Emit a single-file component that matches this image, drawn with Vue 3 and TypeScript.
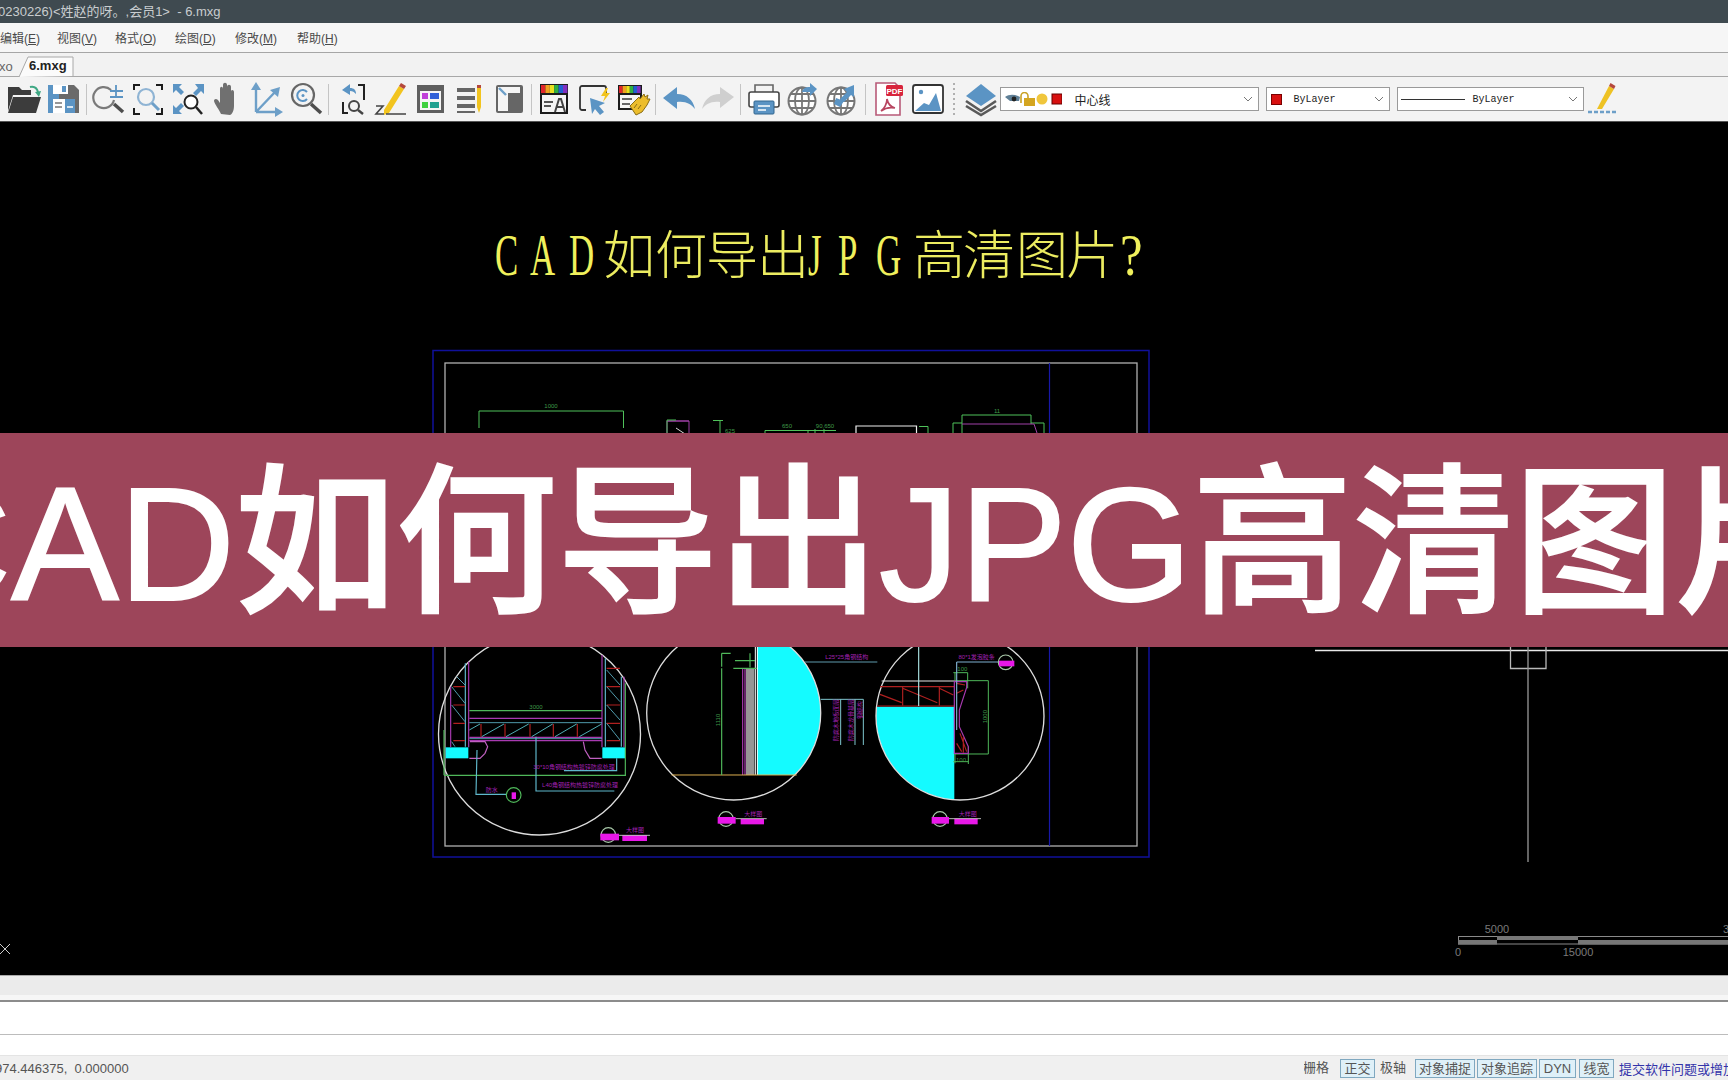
<script setup lang="ts">
interface Glyph { ch: string; x: number; latin: boolean; sx: number }
const titleGlyphs: Glyph[] = [
  { ch: 'C', x: 495, latin: true, sx: 0.58 }, { ch: 'A', x: 530, latin: true, sx: 0.58 }, { ch: 'D', x: 569, latin: true, sx: 0.58 },
  { ch: '如', x: 603, latin: false, sx: 1 }, { ch: '何', x: 655, latin: false, sx: 1 }, { ch: '导', x: 706, latin: false, sx: 1 },
  { ch: '出', x: 757, latin: false, sx: 1 }, { ch: 'J', x: 808, latin: true, sx: 0.58 }, { ch: 'P', x: 838, latin: true, sx: 0.58 },
  { ch: 'G', x: 876, latin: true, sx: 0.58 }, { ch: '高', x: 913, latin: false, sx: 1 }, { ch: '清', x: 963, latin: false, sx: 1 },
  { ch: '图', x: 1016, latin: false, sx: 1 }, { ch: '片', x: 1066, latin: false, sx: 1 }, { ch: '?', x: 1120, latin: true, sx: 0.85 }
]
const menus = [
  ['编辑', 'E'], ['视图', 'V'], ['格式', 'O'], ['绘图', 'D'], ['修改', 'M'], ['帮助', 'H']
]
const rainbow = ['#e0252b', '#f0a020', '#e8e020', '#30b040', '#2060d0', '#8030c0']
</script>

<template>
  <div class="app">
    <header class="titlebar"><span>0230226)&lt;姓赵的呀。,会员1&gt;&nbsp; - 6.mxg</span></header>

    <nav class="menubar">
      <span v-for="m in menus" :key="m[1]" class="menu">{{ m[0] }}(<u>{{ m[1] }}</u>)</span>
    </nav>

    <div class="tabs">
      <span class="tab-prev">xo</span>
      <span class="tab-active">
        <svg class="tab-shape" viewBox="0 0 56 21" width="56" height="21"><path d="M0 21 L9 1 H54 V20" fill="#fbfbfb" stroke="#a8a8a8"/></svg>
        <b>6.mxg</b>
      </span>
    </div>

    <div class="toolbar">
      <!-- open -->
      <div class="cell"><svg class="ic" viewBox="0 0 36 36">
        <path d="M2 6h11l3 3h9v5H7L2 30z" fill="#3c3c3c"/><path d="M7 16h28l-5 16H2z" fill="#3c3c3c"/>
        <path d="M24 6c4-1 7 1 8 5" fill="none" stroke="#3fa884" stroke-width="2"/><path d="M29 11l6-1-2 6z" fill="#3fa884"/>
      </svg></div>
      <!-- save -->
      <div class="cell"><svg class="ic" viewBox="0 0 36 36">
        <path d="M3 4h11v28H3z" fill="#5b94c4"/><path d="M14 4h15l5 5v23H14z" fill="#6a6a6a"/>
        <rect x="8" y="4" width="15" height="9" fill="#fff"/><rect x="17" y="5" width="4" height="6" fill="#5b94c4"/>
        <rect x="8" y="18" width="22" height="14" fill="#fff"/><rect x="20" y="18" width="10" height="14" fill="#5b94c4"/>
        <path d="M10 22h7M10 26h7" stroke="#777" stroke-width="1.5"/><path d="M22 26h6" stroke="#fff" stroke-width="1.5"/>
      </svg></div>
      <div class="sep"></div>
      <!-- zoom realtime + -->
      <div class="cell"><svg class="ic" viewBox="0 0 36 36">
        <path d="M20 9A10.500 10.500 0 1 0 23 19" fill="none" stroke="#7a7a7a" stroke-width="2.200"/>
        <path d="M23 23l9 8" stroke="#4d4d4d" stroke-width="3.500"/><path d="M25 4v13M19 10h13M19 16h13" stroke="#5b94c4" stroke-width="1.800"/>
      </svg></div>
      <!-- zoom window -->
      <div class="cell"><svg class="ic" viewBox="0 0 36 36">
        <path d="M4 9V4h6M26 4h6v5M4 27v6h6M26 33h6v-6" fill="none" stroke="#1c1c1c" stroke-width="2"/>
        <circle cx="16" cy="16" r="8" fill="none" stroke="#8fb4d4" stroke-width="2.200"/><path d="M22 22l7 7" stroke="#6d9fc8" stroke-width="3"/>
      </svg></div>
      <!-- zoom extents -->
      <div class="cell"><svg class="ic" viewBox="0 0 36 36">
        <path d="M3 3h9l-3 3 5 5-3 3-5-5-3 3zM34 3v10l-3-3-5 5-3-3 5-5-3-4zM3 33V24l3 3 5-5 3 3-5 5 3 3z" fill="#5b94c4"/>
        <circle cx="21" cy="21" r="6.500" fill="#fff" stroke="#222" stroke-width="2"/><path d="M26 26l6 7" stroke="#222" stroke-width="2.500"/>
      </svg></div>
      <!-- hand -->
      <div class="cell"><svg class="ic" viewBox="0 0 36 36">
        <path d="M12 33c-2-5-6-9-7-13 0-2 2-3 4-1l2 3V8c0-3 3-3 3 0v8-12c0-3 4-3 4 0v12-10c0-3 4-3 4 0v12-7c0-3 3-2 3 0v14c0 6-3 9-4 9z" fill="#707070"/>
      </svg></div>
      <!-- axes -->
      <div class="cell"><svg class="ic" viewBox="0 0 36 36">
        <path d="M8 31V7M8 31h24M8 31L28 10" fill="none" stroke="#6d9fc8" stroke-width="2.400"/>
        <path d="M8 1l5 8H3zM35 31l-8 5v-10zM32 6l-2 10-8-7z" fill="#6d9fc8"/>
      </svg></div>
      <!-- zoom center -->
      <div class="cell"><svg class="ic" viewBox="0 0 36 36">
        <circle cx="15" cy="14" r="11" fill="none" stroke="#666" stroke-width="2.200"/>
        <path d="M19 11a5.500 5.500 0 1 0 0 7" fill="none" stroke="#5b94c4" stroke-width="2"/><circle cx="15" cy="14.500" r="1.500" fill="#5b94c4"/>
        <path d="M23 23l10 9" stroke="#4d4d4d" stroke-width="3.500"/>
      </svg></div>
      <div class="sep"></div>
      <!-- zoom previous -->
      <div class="cell"><svg class="ic" viewBox="0 0 36 36">
        <path d="M10 21v11h5M25 4h6v15" fill="none" stroke="#222" stroke-width="2"/>
        <path d="M9 9l8-6v4c4 0 6 2 6 6-2-2-3-3-6-3v4z" fill="#5b94c4"/>
        <circle cx="21" cy="25" r="5" fill="none" stroke="#444" stroke-width="2"/><path d="M25 29l5 4" stroke="#444" stroke-width="2.400"/>
      </svg></div>
      <!-- pencil Z -->
      <div class="cell"><svg class="ic" viewBox="0 0 36 36">
        <path d="M26 5l5 3-15 24-5 2 0-5z" fill="#f2c41e"/><path d="M26 5l2-3 5 3-2 3z" fill="#b5483c"/>
        <path d="M3 25h7l-7 8h8M13 33h20" fill="none" stroke="#444" stroke-width="1.600"/>
      </svg></div>
      <!-- table -->
      <div class="cell"><svg class="ic" viewBox="0 0 36 36">
        <rect x="5" y="4" width="27" height="28" fill="#5f5f5f"/><rect x="8" y="10" width="21" height="19" fill="#f5f5f5"/>
        <rect x="10" y="12" width="6" height="6" fill="#c040d8"/><rect x="18" y="12" width="9" height="6" fill="#3060d8"/>
        <rect x="10" y="21" width="6" height="6" fill="#40d040"/><rect x="18" y="21" width="9" height="6" fill="#20a090"/>
      </svg></div>
      <!-- list pencil -->
      <div class="cell"><svg class="ic" viewBox="0 0 36 36">
        <path d="M6 7h18v4H6zM6 15h18v4H6zM6 23h18v4H6zM6 30h18v2H6z" fill="#666"/>
        <path d="M26 7h4v19l-2 6-2-6z" fill="#f2c41e"/><rect x="26" y="4" width="4" height="3" fill="#b5483c"/>
      </svg></div>
      <!-- panel -->
      <div class="cell"><svg class="ic" viewBox="0 0 36 36">
        <rect x="5" y="4" width="27" height="28" rx="2" fill="#666"/><path d="M7 6h22v6H17v18H7z" fill="#f5f5f5"/>
        <path d="M8 7l7 7" stroke="#6d9fc8" stroke-width="2.400"/>
      </svg></div>
      <div class="sep"></div>
      <!-- colour table -->
      <div class="cell"><svg class="ic" viewBox="0 0 36 36">
        <rect x="4" y="3" width="28" height="30" fill="#1c1c1c"/>
        <rect v-for="(c, i) in rainbow" :key="c" :x="5 + i * 4.4" y="4" width="4.400" height="8" :fill="c"/>
        <rect x="6" y="14" width="24" height="17" fill="#f5f5f5"/>
        <path d="M8 21h9M8 25h7" stroke="#555" stroke-width="2"/><path d="M19 31l4-13h2l4 13M21 26h6" fill="none" stroke="#444" stroke-width="2"/>
      </svg></div>
      <!-- select -->
      <div class="cell"><svg class="ic" viewBox="0 0 36 36">
        <path d="M10 29H6a2 2 0 0 1-2-2V7a2 2 0 0 1 2-2h22a2 2 0 0 1 2 2v5" fill="none" stroke="#333" stroke-width="1.800"/>
        <path d="M14 17l15 5-6 3 5 6-4 3-5-6-3 5z" fill="#5b94c4"/><path d="M30 7l-5 8h4l-2 6 7-9h-4l2-5z" fill="#f2c41e"/>
      </svg></div>
      <!-- brush -->
      <div class="cell"><svg class="ic" viewBox="0 0 36 36">
        <rect x="3" y="4" width="24" height="25" fill="#1c1c1c"/>
        <rect v-for="(c, i) in rainbow" :key="c" :x="4 + i * 3.6" y="5" width="3.600" height="7" :fill="c"/>
        <rect x="5" y="14" width="20" height="13" fill="#f5f5f5"/><path d="M7 18h10M7 23h8" stroke="#666" stroke-width="2"/>
        <path d="M15 25l9-9 1 2 4-5 1 3 3-2-1 4 3 0-3 6-5 7-6 3z" fill="#ecbd2c" stroke="#8a6d14"/>
        <path d="M22 23l-3 4M26 24l-3 4" stroke="#8a6d14"/>
      </svg></div>
      <div class="sep"></div>
      <!-- undo -->
      <div class="cell"><svg class="ic" viewBox="0 0 36 36">
        <path d="M2 17L16 6v7c10 0 16 6 18 15-4-5-9-8-18-7v7z" fill="#5b94c4"/>
      </svg></div>
      <!-- redo -->
      <div class="cell"><svg class="ic" viewBox="0 0 36 36">
        <path d="M34 16L20 6v7C10 13 4 19 2 28c4-5 9-8 18-7v6z" fill="#cfcfcf"/>
      </svg></div>
      <div class="sep"></div>
      <!-- print -->
      <div class="cell"><svg class="ic" viewBox="0 0 36 36">
        <path d="M9 11V4h18v7" fill="none" stroke="#666" stroke-width="1.600"/>
        <rect x="3" y="11" width="30" height="15" rx="2" fill="#fff" stroke="#444" stroke-width="1.600"/>
        <rect x="8" y="20" width="20" height="13" rx="1" fill="#5b94c4" stroke="#33668f"/><path d="M12 25h12M12 29h8" stroke="#fff" stroke-width="1.500"/>
      </svg></div>
      <!-- globe 1 -->
      <div class="cell"><svg class="ic" viewBox="0 0 36 36">
        <circle cx="17" cy="20" r="13.500" fill="#fff" stroke="#777" stroke-width="2"/>
        <path d="M17 6.500v27M3.500 20h27M5.500 13h23M5.500 27h23" stroke="#777" stroke-width="1.800"/><ellipse cx="17" cy="20" rx="7" ry="13.500" fill="none" stroke="#777" stroke-width="1.800"/>
        <path d="M17 11c1-4 4-5 8-5V2l7 6-7 7v-4c-3 0-6 0-8 0z" fill="#5b94c4"/>
      </svg></div>
      <!-- globe 2 -->
      <div class="cell"><svg class="ic" viewBox="0 0 36 36">
        <circle cx="17" cy="20" r="13.500" fill="#fff" stroke="#777" stroke-width="2"/>
        <path d="M17 6.500v27M3.500 20h27M5.500 13h23M5.500 27h23" stroke="#777" stroke-width="1.800"/><ellipse cx="17" cy="20" rx="7" ry="13.500" fill="none" stroke="#777" stroke-width="1.800"/>
        <path d="M30 4v12l-3-2-7 7-4-3 7-7-3-3zM12 17l8 3-4 6-6-3z" fill="#5b94c4"/>
      </svg></div>
      <div class="sep"></div>
      <!-- pdf -->
      <div class="cell"><svg class="ic" viewBox="0 0 36 36">
        <path d="M6 2h19l5 5v27H6z" fill="#fff" stroke="#b85a78" stroke-width="1.600"/>
        <rect x="16" y="4" width="17" height="11" rx="1.500" fill="#d8243c"/>
        <text x="24.500" y="12.500" class="pdf-label">PDF</text>
        <path d="M11 30c3-2 6-7 6-12 1 5 4 8 8 9-5-1-10 0-14 3z" fill="none" stroke="#b84560" stroke-width="1.700"/>
      </svg></div>
      <!-- picture -->
      <div class="cell"><svg class="ic" viewBox="0 0 36 36">
        <rect x="3" y="4" width="30" height="28" rx="2.500" fill="#fff" stroke="#333" stroke-width="1.800"/>
        <circle cx="11" cy="11" r="2.200" fill="#5b94c4"/><path d="M5 30l9-8 5 2 7-12 5 18z" fill="#5b94c4"/>
      </svg></div>
      <div class="sep-dots"></div>
      <!-- layers -->
      <div class="cell"><svg class="ic" viewBox="0 0 36 36">
        <path d="M18 3l15 12-15 10L3 15z" fill="#5b94c4"/>
        <path d="M3 20l15 10 15-10M3 25l15 9 15-9" fill="none" stroke="#5a5a5a" stroke-width="2.600"/>
      </svg></div>

      <div class="combo combo-layer">
        <svg class="layer-state" viewBox="0 0 58 14" width="58" height="14">
          <path d="M1 5c4-3 10-3 15 0l-1 4H6z" fill="#5f7f96"/><circle cx="10" cy="7" r="2.400" fill="#222"/>
          <path d="M17 11V4a3.500 3.500 0 0 1 7 0v2" fill="none" stroke="#c9a227" stroke-width="1.600"/><rect x="20" y="6" width="11" height="8" fill="#d4a520"/>
          <circle cx="38" cy="7" r="5.500" fill="#f0c63c"/>
          <rect x="48" y="2" width="10" height="10" fill="#d81010" stroke="#600"/>
        </svg>
        <span class="combo-cn">中心线</span>
        <svg class="chev" viewBox="0 0 10 6" width="10" height="6"><path d="M1 1l4 4 4-4" fill="none" stroke="#777" stroke-width="1"/></svg>
      </div>
      <div class="combo combo-colour">
        <span class="swatch"></span><span class="combo-mono">ByLayer</span>
        <svg class="chev" viewBox="0 0 10 6" width="10" height="6"><path d="M1 1l4 4 4-4" fill="none" stroke="#777" stroke-width="1"/></svg>
      </div>
      <div class="combo combo-line">
        <span class="sample"></span><span class="combo-mono">ByLayer</span>
        <svg class="chev" viewBox="0 0 10 6" width="10" height="6"><path d="M1 1l4 4 4-4" fill="none" stroke="#777" stroke-width="1"/></svg>
      </div>
      <div class="cell cell-last"><svg class="ic" viewBox="0 0 36 36">
        <path d="M24 5l5 3-12 20-5 0z" fill="#eec224"/><path d="M24 5l1.500-3 5 3-1.500 3z" fill="#b5483c"/>
        <path d="M3 31h30" stroke="#6d9fc8" stroke-width="2.400" stroke-dasharray="4 2"/>
      </svg></div>
    </div>

    <main class="canvas">
      <svg class="drawing" viewBox="0 122 1728 853" width="1728" height="853">
        <!-- title text -->
        <g v-for="g in titleGlyphs" :key="g.ch">
          <text v-if="g.latin" class="t-latin" :transform="`translate(${g.x} 275) scale(${g.sx} 1)`">{{ g.ch }}</text>
          <text v-else class="t-cjk" :x="g.x" y="274">{{ g.ch }}</text>
        </g>

        <!-- sheet frames -->
        <rect x="433" y="350.500" width="716" height="506.500" fill="none" stroke="#10109a" stroke-width="1.500"/>
        <rect x="445" y="363" width="692" height="483" fill="none" stroke="#b0b0b0" stroke-width="1.300"/>
        <path d="M1049.500 363V846" stroke="#1818a8" stroke-width="1.200"/>

        <!-- top row of details -->
        <g fill="none" stroke-width="1">
          <path d="M479 428V411H623.500V428" stroke="#4fc25a"/>
          <path d="M667 433V421H689V433M667 421H689" stroke="#a040a8"/>
          <path d="M667 433V420H676" stroke="#4fc25a"/>
          <path d="M676 428L688 436" stroke="#ddd"/>
          <path d="M713 420.500H723M720 420.500V433" stroke="#4fc25a"/>
          <path d="M765 433V430.500H808V433M808 430.500H836M815 433V429M824 433V429" stroke="#4fc25a"/>
          <path d="M856 433V426H916.500V433" stroke="#eee" stroke-width="1.200"/>
          <path d="M919 426.500H928V433" stroke="#4fc25a"/>
          <path d="M962 433V415H1031V424M953 433V423H962M1031 423H1044V433" stroke="#4fc25a"/>
          <path d="M962 424H1034L1037 433" stroke="#a040a8"/>
        </g>
        <text x="551" y="408" class="gt" text-anchor="middle">1000</text>
        <text x="725" y="433" class="gt">625</text>
        <text x="787" y="428" class="gt" text-anchor="middle">650</text>
        <text x="825" y="428" class="gt" text-anchor="middle">90,650</text>
        <text x="997" y="413" class="gt" text-anchor="middle">11</text>

        <!-- left circle detail, in 1/3 px units -->
        <g transform="translate(420 630) scale(.33333)" fill="none" stroke-width="3.500">
          <circle cx="358.500" cy="312" r="303" stroke="#ddd" stroke-width="4"/>
          <rect x="77" y="352" width="68" height="33" fill="#14fbff" stroke="none"/>
          <rect x="547" y="352" width="68" height="33" fill="#14fbff" stroke="none"/>
          <path d="M92 170V352M146 95V352M546 75V352M612 140V352" stroke="#a83ab0"/>
          <path d="M136 100V350M556 85V350M604 140V350" stroke="#5fb8cc"/>
          <path d="M100 170H135M100 225H135M100 280H135M100 332H135M560 115H600M560 170H600M560 225H600M560 280H600M560 332H600" stroke="#b02020"/>
          <path d="M95 170L135 220M95 225L135 275M110 140L135 165M95 335L105 350M560 170L600 215M560 225L600 270M560 120L600 165M560 280L600 330" stroke="#5fb8cc" stroke-width="2.500"/>
          <path d="M148 242H546M616 160V436M72 436H618M72 300V436" stroke="#4fb85a"/>
          <path d="M148 265H546M148 322H546M148 332H546" stroke="#a83ab0"/>
          <path d="M148 278H546M148 326H546" stroke="#5fb8cc" stroke-width="2.500"/>
          <path d="M183 282V320M255 282V320M330 282V320M400 282V320M472 282V320" stroke="#b02020"/>
          <path d="M148 300L180 282M185 320L252 282M258 320L326 282M335 320L398 282M405 320L470 282M478 320L545 282" stroke="#5fd0d8" stroke-width="2.500"/>
          <path d="M150 335H195L203 350L195 370L180 385H148M490 335L495 360L510 385H545" stroke="#c060c0"/>
          <path d="M171 360L168 493H258M348 320V483H583M590 385V422H432" stroke="#5fb8cc"/>
          <circle cx="281" cy="495" r="22" stroke="#4fb85a"/>
          <rect x="275" y="487" width="13" height="20" fill="#e818e8" stroke="none"/>
          <circle cx="565" cy="615" r="22" stroke="#a8c8a8"/>
          <rect x="541" y="611" width="56" height="20" fill="#e818e8" stroke="none"/>
          <rect x="607" y="616" width="74" height="17" fill="#e818e8" stroke="none"/>
          <path d="M597 616H690" stroke="#ddd" stroke-width="2.500"/>
          <text x="348" y="238" class="gz" text-anchor="middle">3000</text>
          <text x="215" y="486" class="pz" text-anchor="middle">防水</text>
          <text x="462" y="416" class="pz" text-anchor="middle">30*10角钢结构热镀锌防腐处理</text>
          <text x="480" y="472" class="pz" text-anchor="middle">L40角钢结构热镀锌防腐处理</text>
          <text x="645" y="606" class="pz" text-anchor="middle">大样图</text>
        </g>

        <!-- centre circle -->
        <g fill="none">
          <path d="M757 647V775H794.700A87 87 0 0 0 790.400 647Z" fill="#14fbff"/>
          <circle cx="733.700" cy="713" r="87" stroke="#ddd" stroke-width="1.300"/>
        </g>
        <g transform="translate(420 630) scale(.33333)" fill="none" stroke-width="3.500">
          <rect x="978" y="115" width="25" height="320" fill="#969696" stroke="none"/>
          <path d="M968 115V435M975 115V435" stroke="#a83ab0"/>
          <path d="M1006 45V435M1012 45V435" stroke="#fff" stroke-width="3"/>
          <path d="M755 435H1130" stroke="#e0b050" stroke-width="3"/>
          <path d="M905 115V435M905 70H932M905 70V110M940 115H1010M945 92H1005M990 70V112" stroke="#4fb85a"/>
          <circle cx="918" cy="567" r="22" stroke="#a8c8a8"/>
          <rect x="893" y="561" width="54" height="20" fill="#e818e8" stroke="none"/>
          <rect x="962" y="567" width="70" height="16" fill="#e818e8" stroke="none"/>
          <path d="M947 566H1040" stroke="#ddd" stroke-width="2.500"/>
          <text x="1000" y="558" class="pz" text-anchor="middle">大样图</text>
          <text transform="translate(900 270) rotate(-90)" class="gz" text-anchor="middle">1110</text>
        </g>

        <!-- right circle detail -->
        <g transform="translate(800 630) scale(.33333)" fill="none" stroke-width="3.500">
          <path d="M15 96H232" stroke="#5f9aac"/>
          <path d="M62 208H190M122 208V345M165 208V345M190 208V345" stroke="#7fc8d0" stroke-width="3"/>
          <text x="140" y="88" class="pz" text-anchor="middle">L25*25角钢结构</text>
          <text transform="translate(114 270) rotate(-90)" class="pz" text-anchor="middle">防腐木地板面层</text>
          <text transform="translate(158 270) rotate(-90)" class="pz" text-anchor="middle">防腐木龙骨基层</text>
          <text transform="translate(186 240) rotate(-90)" class="pz" text-anchor="middle">钢结构</text>
          <path d="M228 258A252 252 0 0 0 463 509V230H231Q228 244 228 258Z" fill="#14fbff"/>
          <circle cx="480" cy="258" r="252" stroke="#ddd" stroke-width="4"/>
          <path d="M240 170H462M232 228H462M308 172V226M418 172V226M240 193L305 218M308 175L412 218M418 175L460 195" stroke="#b02020"/>
          <path d="M245 153H470" stroke="#e8e8e8"/>
          <path d="M356 48V228" stroke="#a8e0e0"/>
          <path d="M470 152H565V372H463M460 128H503M465 128V152M503 128V175M460 395H505M505 350V402M465 372V400" stroke="#4fb85a" stroke-width="3"/>
          <path d="M463 155H500V172L478 240V290L505 350V370H463Z" stroke="#a83ab0"/>
          <path d="M470 160L495 165M470 190L490 180M480 310L500 365M490 320V368M470 340L485 365" stroke="#b02020"/>
          <path d="M470 96V300M470 96H595" stroke="#7fb0d0"/>
          <circle cx="617" cy="97" r="22" stroke="#a8c8a8"/>
          <rect x="597" y="92" width="46" height="17" fill="#e818e8" stroke="none"/>
          <circle cx="420" cy="567" r="22" stroke="#a8c8a8"/>
          <rect x="395" y="561" width="52" height="20" fill="#e818e8" stroke="none"/>
          <rect x="463" y="566" width="70" height="17" fill="#e818e8" stroke="none"/>
          <path d="M447 566H543" stroke="#ddd" stroke-width="2.500"/>
          <text x="503" y="558" class="pz" text-anchor="middle">大样图</text>
          <text x="530" y="88" class="pz" text-anchor="middle">80*1发泡胶条</text>
          <text x="487" y="124" class="gz" text-anchor="middle">100</text>
          <text x="483" y="396" class="gz" text-anchor="middle">100</text>
          <text transform="translate(562 260) rotate(-90)" class="gz" text-anchor="middle">1000</text>
        </g>

        <!-- right drawing -->
        <path d="M1315 650.500H1728" stroke="#e8e8e8" stroke-width="1.300"/>
        <path d="M1510.500 640V668.500H1546V640" fill="none" stroke="#b8b8b8" stroke-width="1.300"/>
        <path d="M1528 640V862" stroke="#9a9a9a" stroke-width="1.300"/>

        <!-- cursor mark -->
        <path d="M0 944L10 954M10 944L0 954" stroke="#ccc" stroke-width="1"/>

        <!-- scale bar -->
        <g>
          <rect x="1458.500" y="936.500" width="270" height="7.500" fill="none" stroke="#8a8a8a"/>
          <rect x="1458" y="940" width="39" height="4.500" fill="#777"/>
          <rect x="1497" y="936" width="81" height="4" fill="#777"/>
          <rect x="1578" y="940" width="150" height="4.500" fill="#777"/>
          <text x="1497" y="933" class="scale" text-anchor="middle">5000</text>
          <text x="1723" y="933" class="scale">3</text>
          <text x="1458" y="956" class="scale" text-anchor="middle">0</text>
          <text x="1578" y="956" class="scale" text-anchor="middle">15000</text>
        </g>
      </svg>

      <div class="band"><span class="band-text">CAD如何导出JPG高清图片</span></div>
    </main>

    <div class="tool-strip"></div>
    <div class="cmd-line"></div>
    <div class="cmd-input"></div>

    <footer class="status">
      <span class="coords">974.446375,&nbsp; 0.000000</span>
      <div class="status-right">
        <span class="st st-grid">栅格</span>
        <span class="st on w-ortho">正交</span>
        <span class="st w-polar">极轴</span>
        <span class="st on w-snap">对象捕捉</span>
        <span class="st on w-track">对象追踪</span>
        <span class="st on w-dyn">DYN</span>
        <span class="st on w-lw">线宽</span>
        <span class="link">提交软件问题或增加新功能</span>
      </div>
    </footer>
  </div>
</template>

<style scoped>
.app {
  width: 1728px;
  height: 1080px;
  display: flex;
  flex-direction: column;
  overflow: hidden;
  font-family: "Liberation Sans", "Noto Sans CJK SC", sans-serif;
  background: #f2f2f2;
}
.titlebar {
  height: 23px;
  flex: none;
  background: #3f4a50;
  color: #c9cdcf;
  font-size: 13px;
  line-height: 24px;
  white-space: nowrap;
  overflow: hidden;
}
.titlebar span { margin-left: -2px; display: inline-block; }
.menubar {
  height: 29px;
  flex: none;
  display: flex;
  align-items: center;
  background: #f6f6f6;
  border-bottom: 1px solid #a6a6a6;
  font-size: 12px;
  color: #4a4a4a;
  box-sizing: content-box;
}
.menu { white-space: nowrap; }
.menu:nth-child(1) { width: 57px; }
.menu:nth-child(2) { width: 58px; }
.menu:nth-child(3) { width: 60px; }
.menu:nth-child(4) { width: 60px; }
.menu:nth-child(5) { width: 62px; }
.menu u { text-decoration: underline; }
.tabs {
  height: 23px;
  flex: none;
  display: flex;
  align-items: flex-end;
  background: #f2f2f2;
  border-bottom: 1px solid #a8a8a8;
}
.tab-prev {
  width: 19px;
  font-size: 13px;
  color: #666;
  line-height: 18px;
  overflow: hidden;
  text-indent: -1px;
}
.tab-active {
  position: relative;
  width: 56px;
  height: 21px;
  margin-bottom: -1px;
}
.tab-shape { position: absolute; left: 0; top: 0; }
.tab-active b {
  position: relative;
  display: block;
  padding-left: 10px;
  font-size: 13px;
  line-height: 20px;
  color: #222;
}
.toolbar {
  height: 45px;
  flex: none;
  display: flex;
  align-items: center;
  padding-left: 4.400px;
  background: #f3f3f3;
  border-bottom: 1px solid #555;
  box-sizing: border-box;
}
.cell {
  width: 39.300px;
  flex: none;
  display: flex;
  justify-content: center;
}
.ic { width: 36px; height: 36px; display: block; }
.sep {
  width: 6.500px;
  height: 31px;
  flex: none;
  background: linear-gradient(#c4c4c4, #c4c4c4) center / 1px 100% no-repeat;
}
.sep-dots {
  width: 13.900px;
  height: 33px;
  flex: none;
  background: repeating-linear-gradient(#b0b0b0 0 2px, transparent 2px 5px) center / 2px 100% no-repeat;
}
.pdf-label {
  font-size: 8px;
  font-weight: 700;
  fill: #fff;
  text-anchor: middle;
}
.combo {
  height: 24px;
  flex: none;
  box-sizing: border-box;
  border: 1px solid #9a9a9a;
  background: #fff;
  display: flex;
  align-items: center;
  position: relative;
  font-size: 12px;
  color: #222;
}
.chev { position: absolute; right: 5px; top: 8px; }
.combo-layer { width: 259px; padding-left: 3px; }
.layer-state { flex: none; }
.combo-cn { margin-left: 12px; }
.combo-colour { width: 124px; margin-left: 7px; padding-left: 4px; }
.swatch {
  width: 11px;
  height: 11px;
  background: #d81010;
  border: 1px solid #7a0000;
  box-sizing: border-box;
  margin-right: 11px;
}
.combo-line { width: 187px; margin-left: 7px; padding-left: 3px; }
.sample {
  width: 64px;
  height: 1px;
  background: #333;
  margin-right: 7px;
}
.combo-mono {
  font-family: "Liberation Mono", monospace;
  font-size: 10px;
}
.cell-last { margin-left: 1px; width: 36px; }
.canvas {
  flex: 1 1 0;
  position: relative;
  background: #000;
  overflow: hidden;
  min-height: 0;
}
.drawing { display: block; }
.t-latin {
  font-family: "Liberation Serif", serif;
  font-size: 60px;
  fill: #f0f05c;
}
.t-cjk {
  font-family: "Noto Sans CJK SC", sans-serif;
  font-size: 52px;
  font-weight: 300;
  fill: #ecec60;
}
.gt { font-size: 6px; fill: #3f9a48; }
.gz { font-size: 18px; fill: #3f9a48; }
.pz { font-size: 18px; fill: #a020b0; }
.scale { font-size: 11px; fill: #7a7a7a; }
.band {
  position: absolute;
  left: 0;
  right: 0;
  top: 311px;
  height: 214px;
  background: #9d455a;
  display: flex;
  align-items: center;
  overflow: hidden;
}
.band-text {
  flex: none;
  margin-left: -105px;
  padding-top: 8px;
  white-space: nowrap;
  font-size: 161px;
  line-height: 206px;
  font-weight: 500;
  color: #fff;
  -webkit-text-stroke: 2px #fff;
}
.tool-strip {
  height: 27px;
  flex: none;
  box-sizing: border-box;
  background: linear-gradient(#ebebeb 0 19px, #f6f6f6 19px);
  border-top: 1px solid #aaa;
  border-bottom: 2px solid #8c8c8c;
}
.cmd-line {
  height: 33px;
  flex: none;
  background: #fff;
  border-bottom: 1px solid #bcbcbc;
  box-sizing: border-box;
}
.cmd-input {
  height: 20px;
  flex: none;
  background: #fff;
}
.status {
  height: 25px;
  flex: none;
  box-sizing: border-box;
  background: #f0f0f0;
  border-top: 1px solid #e4e4e4;
  display: flex;
  align-items: center;
  justify-content: space-between;
  font-size: 13px;
  color: #555;
  white-space: nowrap;
  overflow: hidden;
}
.coords { margin-left: -5px; }
.status-right {
  display: flex;
  align-items: center;
  width: 424px;
  flex: none;
  overflow: hidden;
}
.st {
  height: 19px;
  line-height: 18px;
  box-sizing: border-box;
  text-align: center;
  flex: none;
}
.on {
  background: #dff0f8;
  border: 1px solid #7fa8c0;
}
.st-grid { width: 37px; text-align: left; margin-left: -1px; padding-right: 4px; }
.w-ortho { width: 35px; }
.w-polar { width: 40px; text-align: left; padding-left: 5px; }
.w-snap { width: 60px; }
.w-track { width: 60px; margin-left: 2px; }
.w-dyn { width: 37px; margin-left: 2px; }
.w-lw { width: 35px; margin-left: 3px; }
.link {
  color: #3333aa;
  margin-left: 5px;
  flex: none;
}
</style>

<style>
html, body { margin: 0; background: #000; overflow: hidden; }
</style>
